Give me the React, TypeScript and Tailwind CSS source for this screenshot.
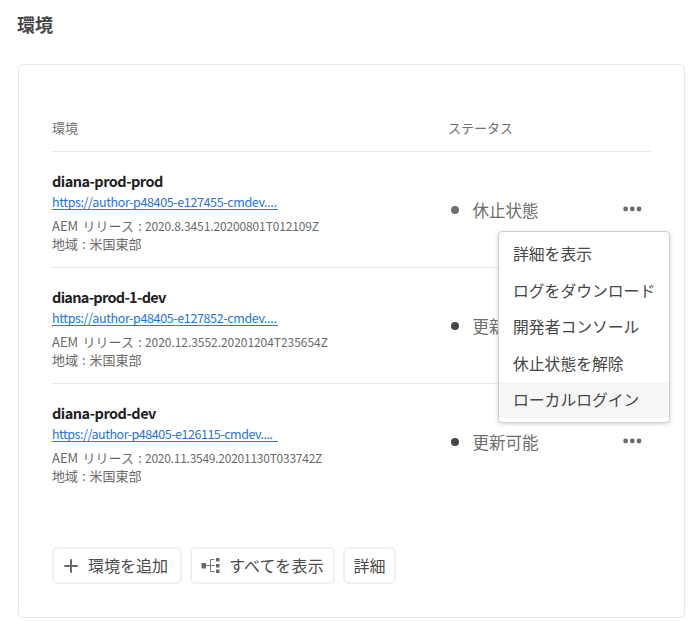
type Environment = {
  name: string;
  nameClass: string;
  url: string;
  urlClass: string;
  release: string;
  releaseClass: string;
  status: string;
  dotClass: string;
};

const environments: Environment[] = [
  {
    name: 'diana-prod-prod',
    nameClass: 'tracking-[-0.53px]',
    url: 'https://author-p48405-e127455-cmdev....',
    urlClass: 'tracking-[-0.37px]',
    release: '2020.8.3451.20200801T012109Z',
    releaseClass: 'tracking-[-0.13px]',
    status: '休止状態',
    dotClass: 'bg-[#6e6e6e]',
  },
  {
    name: 'diana-prod-1-dev',
    nameClass: 'tracking-[-0.7px]',
    url: 'https://author-p48405-e127852-cmdev....',
    urlClass: 'tracking-[-0.37px]',
    release: '2020.12.3552.20201204T235654Z',
    releaseClass: 'tracking-[-0.05px]',
    status: '更新可能',
    dotClass: 'bg-[#464646]',
  },
  {
    name: 'diana-prod-dev',
    nameClass: 'tracking-[-0.5px]',
    url: 'https://author-p48405-e126115-cmdev....',
    urlClass: 'tracking-[-0.47px]',
    release: '2020.11.3549.20201130T033742Z',
    releaseClass: 'tracking-[-0.25px]',
    status: '更新可能',
    dotClass: 'bg-[#464646]',
  },
];

const menuItems = ['詳細を表示', 'ログをダウンロード', '開発者コンソール', '休止状態を解除', 'ローカルログイン'];

function MoreIcon() {
  return (
    <svg width="20" height="6" viewBox="0 0 20 6" fill="#6a6a6a">
      <circle cx="2.6" cy="3" r="2.4" />
      <circle cx="9.3" cy="3" r="2.4" />
      <circle cx="16" cy="3" r="2.4" />
    </svg>
  );
}

function PlusIcon() {
  return (
    <svg width="14" height="14" viewBox="0 0 14 14" stroke="#6a6a6a" strokeWidth="2" strokeLinecap="round">
      <path d="M7 1v12M1 7h12" />
    </svg>
  );
}

function TreeIcon() {
  return (
    <svg width="19" height="16" viewBox="0 0 19 16" fill="none">
      <path d="M5 7.500h9M13.500 1.500h-4v12h4" stroke="#777" strokeWidth="1" />
      <path d="M0.500 5h4.500v5.500h-4.500zM15 0h3.500v3.500h-3.500zM15 6h3.500v3.500h-3.500zM15 11.500h3.500v3.500h-3.500z" fill="#686868" />
    </svg>
  );
}

function ActionMenu() {
  return (
    <div
      role="menu"
      className="absolute top-[25px] right-[-27px] z-10 h-[192px] w-[172px] rounded-[4px] border border-[#cfcfcf] bg-white pt-[4px] text-[15.8px] text-[#464646] shadow-[0_1px_4px_rgba(0,0,0,0.18)]"
    >
      {menuItems.map((item, index) => (
        <div
          key={item}
          role="menuitem"
          className={`flex h-[36.4px] items-center pl-[14px] whitespace-nowrap ${index === menuItems.length - 1 ? 'bg-[#f6f6f6]' : ''}`}
        >
          {item}
        </div>
      ))}
    </div>
  );
}

function EnvironmentRow({ env, open, last }: { env: Environment; open: boolean; last: boolean }) {
  return (
    <div className={`flex h-[116px] ${last ? '' : 'border-b border-[#e6e6e6]'}`}>
      <div className="w-[396px] pt-[18px] whitespace-nowrap">
        <div className={`h-[23px] text-[14.5px] leading-[22px] font-bold text-[#222] ${env.nameClass}`}>{env.name}</div>
        <div className="h-[21px] text-[12.5px] leading-[18px]">
          <a className={`inline-block h-[17px] w-[226px] border-b border-[#2a78e0] align-top text-[#2672de] ${env.urlClass}`}>
            {env.url}
          </a>
        </div>
        <div className="mt-[3px] flex h-[18px] leading-[18px] text-[#6a6a6a]">
          <span className="w-[93px] text-[13px] [word-spacing:1.5px]">AEM リリース :</span>
          <span className={`text-[12px] ${env.releaseClass}`}>{env.release}</span>
        </div>
        <div className="h-[18px] text-[13px] leading-[18px] text-[#6a6a6a] [word-spacing:1px]">地域 : 米国東部</div>
      </div>
      <div className="flex h-[116px] flex-1 items-center">
        <span className={`ml-[3px] size-[8px] rounded-full ${env.dotClass}`} />
        <span className="ml-[13.5px] text-[16.5px] leading-[24px] whitespace-nowrap text-[#6e6e6e]">{env.status}</span>
        <div className="relative mr-[8px] ml-auto flex h-[8px]">
          <MoreIcon />
          {open && <ActionMenu />}
        </div>
      </div>
    </div>
  );
}

const buttonClass =
  'flex h-[37px] items-center rounded-[5px] border-2 border-[#f0f0f0] bg-white text-[16px] leading-[22px] whitespace-nowrap text-[#4b4b4b]';

export default function App() {
  return (
    <main className="h-[622px] w-[694px] overflow-hidden bg-white font-['Noto_Sans_CJK_JP',sans-serif]">
      <h1 className="h-[64px] pt-[12px] pl-[17px] text-[18px] leading-[24px] font-bold text-[#464646]">環境</h1>
      <section className="ml-[18px] h-[554px] w-[667px] rounded-[5px] border border-[#e6e6e6] pt-[49px] pr-[33px] pl-[33px]">
        <div className="flex h-[38px] border-b border-[#e6e6e6] text-[13px] leading-[28px] text-[#6e6e6e]">
          <div className="w-[396px]">環境</div>
          <div>ステータス</div>
        </div>
        {environments.map((env, index) => (
          <EnvironmentRow key={env.name} env={env} open={index === 0} last={index === environments.length - 1} />
        ))}
        <div className="mt-[47px] flex gap-[8px]">
          <button className={`${buttonClass} w-[130px] pl-[10px]`}>
            <PlusIcon />
            <span className="ml-[10px] pb-[2px]">環境を追加</span>
          </button>
          <button className={`${buttonClass} w-[145px] pl-[9px]`}>
            <TreeIcon />
            <span className="ml-[9px] pb-[2px] tracking-[0.15px]">すべてを表示</span>
          </button>
          <button className={`${buttonClass} w-[53px] justify-center pb-[2px]`}>詳細</button>
        </div>
      </section>
    </main>
  );
}
